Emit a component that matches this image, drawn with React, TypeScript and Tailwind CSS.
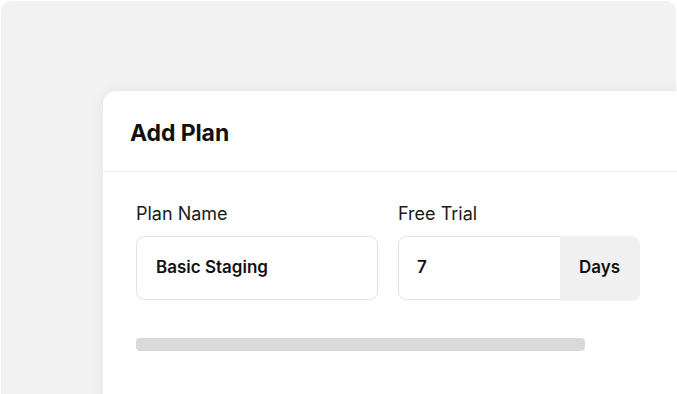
export default function App() {
  return (
    <div
      className="w-[677px] h-[394px] overflow-hidden bg-white p-px"
      style={{ fontFamily: 'Inter, "Noto Sans", sans-serif' }}
    >
      <div className="h-[420px] w-[675px] rounded-[10px] bg-[#f2f2f2] pt-[90px] pl-[102px]">
        <div className="h-[330px] w-[620px] rounded-tl-[14px] bg-white shadow-[0_0_14px_rgba(0,0,0,0.07)]">
          <div className="flex h-[81px] items-center border-b border-[#ececec] pl-[27px] pt-[4px]">
            <h1 className="text-[23px] font-bold tracking-[-0.1px] text-[#111]">Add Plan</h1>
          </div>
          <div className="pl-[33px] pt-[30px]">
            <div className="flex gap-[20px]">
              <div className="w-[242px]">
                <div className="text-[18px] leading-[24px] text-[#1a1a1a]">Plan Name</div>
                <div className="mt-[10px] flex h-[64px] items-center rounded-[8px] border-[1.5px] border-[#e4e4e4] pl-[19px]">
                  <span className="text-[17px] font-semibold text-[#111]">Basic Staging</span>
                </div>
              </div>
              <div className="w-[241px]">
                <div className="text-[18px] leading-[24px] text-[#1a1a1a]">Free Trial</div>
                <div className="mt-[10px] flex h-[64px] rounded-[8px] border-[1.5px] border-[#e4e4e4]">
                  <div className="flex flex-1 items-center pl-[18px]">
                    <span className="text-[17px] font-semibold text-[#111]">7</span>
                  </div>
                  <div className="-my-[1.5px] -mr-[1.5px] flex w-[80px] items-center justify-center rounded-r-[8px] bg-[#f0f0f0]">
                    <span className="text-[17px] font-semibold text-[#111]">Days</span>
                  </div>
                </div>
              </div>
            </div>
            <div className="mt-[38px] h-[13px] w-[449px] rounded-[4px] bg-[#d9d9d9]" />
          </div>
        </div>
      </div>
    </div>
  )
}
